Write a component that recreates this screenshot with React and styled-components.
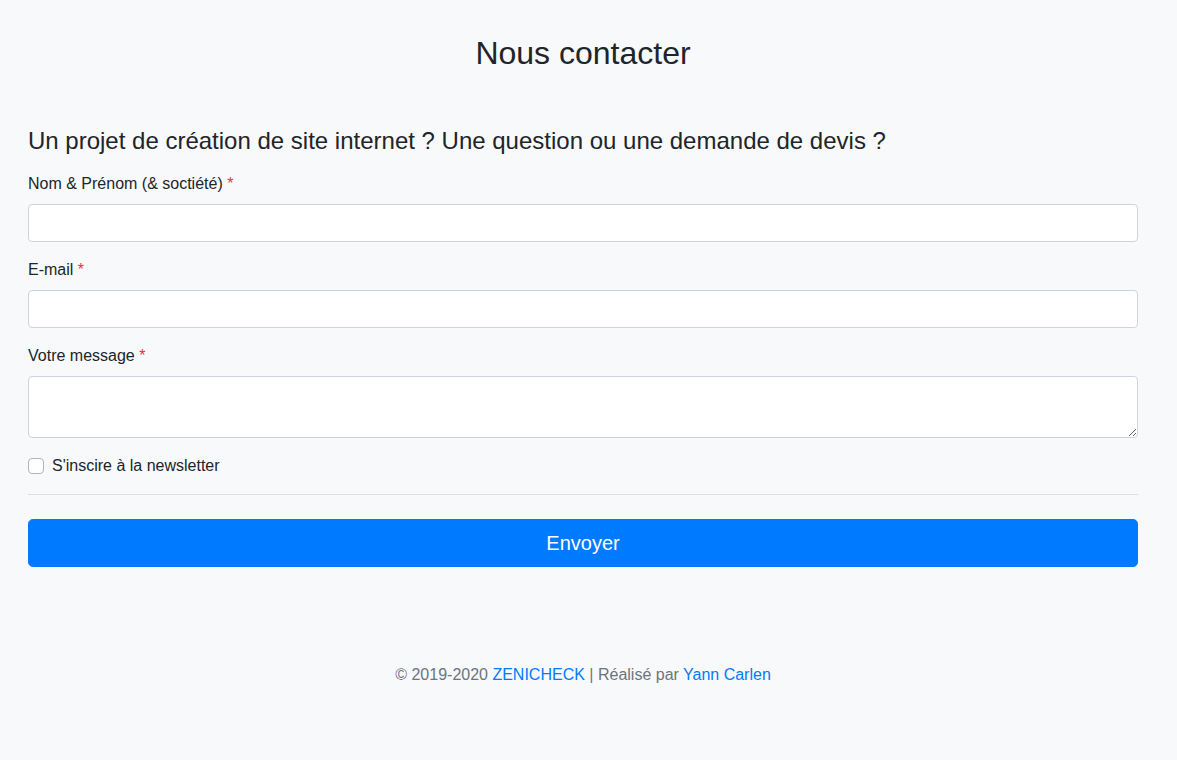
import React from "react";
import styled, { createGlobalStyle } from "styled-components";

const GlobalStyle = createGlobalStyle`
  * { box-sizing: border-box; }
  html, body {
    margin: 0;
    background-color: #f8f9fa;
  }
  body {
    font-family: "Liberation Sans", Arial, sans-serif;
    font-size: 16px;
    line-height: 1.5;
    color: #212529;
  }
`;

const Page = styled.div`
  width: 1166px;
  min-height: 760px;
  padding-top: 34px;
`;

const Container = styled.div`
  width: 1110px;
  margin: 0 auto;
`;

const Title = styled.h2`
  margin: 0 0 55px;
  font-size: 32px;
  font-weight: 500;
  line-height: 1.2;
  text-align: center;
`;

const Subtitle = styled.h4`
  margin: 0 0 16px;
  font-size: 24px;
  font-weight: 500;
  line-height: 1.2;
`;

const Group = styled.div`
  margin-bottom: 16px;
`;

const Label = styled.label`
  display: inline-block;
  margin-bottom: 8px;
`;

const Required = styled.span`
  color: #dc3545;
`;

const Input = styled.input`
  display: block;
  width: 100%;
  height: 38px;
  padding: 6px 12px;
  font: inherit;
  color: #495057;
  background: #fff;
  border: 1px solid #ced4da;
  border-radius: 4px;
`;

const TextArea = styled.textarea`
  display: block;
  width: 100%;
  height: 62px;
  padding: 6px 12px;
  font: inherit;
  color: #495057;
  background: #fff;
  border: 1px solid #ced4da;
  border-radius: 4px;
  resize: vertical;
`;

const CheckRow = styled.label`
  display: flex;
  align-items: center;
  gap: 8px;
`;

const Check = styled.input`
  appearance: none;
  width: 16px;
  height: 16px;
  margin: 0;
  background: #fff;
  border: 1px solid #adb5bd;
  border-radius: 4px;
`;

const Rule = styled.hr`
  margin: 16px 0 24px;
  border: 0;
  border-top: 1px solid rgba(0, 0, 0, 0.1);
`;

const SubmitButton = styled.button`
  display: block;
  width: 100%;
  height: 48px;
  padding: 8px 16px;
  font-family: inherit;
  font-size: 20px;
  line-height: 1.5;
  color: #fff;
  background-color: #007bff;
  border: 1px solid #007bff;
  border-radius: 4.8px;
  cursor: pointer;
`;

const Footer = styled.footer`
  margin-top: 96px;
  text-align: center;
  color: #6c757d;

  a {
    color: #007bff;
    text-decoration: none;
  }
`;

export default function App() {
  return (
    <>
      <GlobalStyle />
      <Page>
        <Container>
          <Title>Nous contacter</Title>
          <Subtitle>Un projet de création de site internet ? Une question ou une demande de devis ?</Subtitle>
          <form onSubmit={(e) => e.preventDefault()}>
            <Group>
              <Label>
                Nom &amp; Prénom (&amp; soctiété) <Required>*</Required>
              </Label>
              <Input type="text" />
            </Group>
            <Group>
              <Label>
                E-mail <Required>*</Required>
              </Label>
              <Input type="email" />
            </Group>
            <Group>
              <Label>
                Votre message <Required>*</Required>
              </Label>
              <TextArea rows={2} />
            </Group>
            <CheckRow>
              <Check type="checkbox" />
              S'inscire à la newsletter
            </CheckRow>
            <Rule />
            <SubmitButton type="submit">Envoyer</SubmitButton>
          </form>
          <Footer>
            © 2019-2020 <a href="#">ZENICHECK</a> | Réalisé par <a href="#">Yann Carlen</a>
          </Footer>
        </Container>
      </Page>
    </>
  );
}
